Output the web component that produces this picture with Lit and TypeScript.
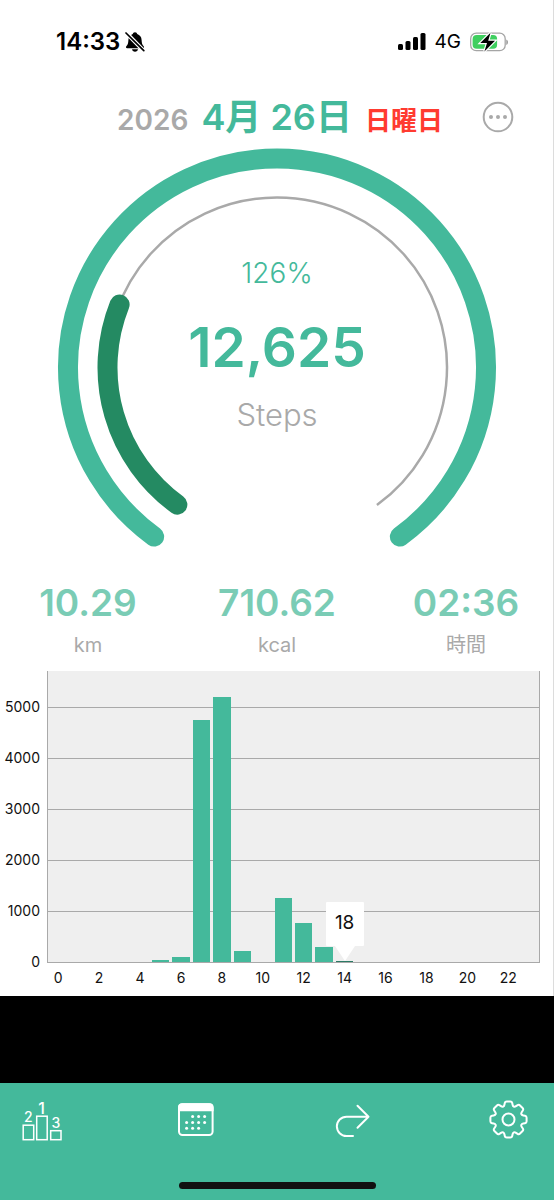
import { LitElement, html, svg, css } from "lit";
import { customElement, property, state } from "lit/decorators.js";

const FONT = css`Inter, "Noto Sans CJK JP", sans-serif`;

/** Point on a circle around (cx, cy); degrees run clockwise from straight down. */
function polar(cx: number, cy: number, r: number, deg: number): string {
  const a = (deg * Math.PI) / 180;
  return `${(cx - r * Math.sin(a)).toFixed(2)} ${(cy + r * Math.cos(a)).toFixed(2)}`;
}

function arc(cx: number, cy: number, r: number, from: number, to: number): string {
  const large = to - from > 180 ? 1 : 0;
  return `M${polar(cx, cy, r, from)}A${r} ${r} 0 ${large} 1 ${polar(cx, cy, r, to)}`;
}

/** Outline of an eight-toothed cog with softly rounded corners. */
function cog(cx: number, cy: number): string {
  const pts: [number, number][] = [];
  for (let k = 0; k < 8; k++) {
    const a = (k * Math.PI) / 4;
    for (const [x, y] of [[-4.4, -13.2], [-3.4, -18.1], [3.4, -18.1], [4.4, -13.2]]) {
      pts.push([
        cx + x * Math.cos(a) - y * Math.sin(a),
        cy + x * Math.sin(a) + y * Math.cos(a),
      ]);
    }
  }
  const n = pts.length;
  const cut = 1.6;
  const toward = (p: [number, number], q: [number, number]) => {
    const d = Math.hypot(q[0] - p[0], q[1] - p[1]);
    const t = Math.min(cut / d, 0.5);
    return `${(p[0] + (q[0] - p[0]) * t).toFixed(2)} ${(p[1] + (q[1] - p[1]) * t).toFixed(2)}`;
  };
  return (
    pts
      .map((p, i) => {
        const prev = pts[(i + n - 1) % n];
        const next = pts[(i + 1) % n];
        return `${i ? "L" : "M"}${toward(p, prev)}Q${p[0].toFixed(2)} ${p[1].toFixed(2)} ${toward(p, next)}`;
      })
      .join("") + "Z"
  );
}

@customElement("status-bar")
export class StatusBar extends LitElement {
  static styles = css`
    :host {
      display: flex;
      align-items: center;
      justify-content: space-between;
      height: 83px;
      padding: 0 46px 0 56px;
      color: #000;
      font-family: ${FONT};
    }
    .group { display: flex; align-items: center; }
    .time { font-size: 24px; font-weight: 600; margin-right: 5px; }
    .net { font-size: 19px; margin: 0 9px; }
    svg { display: block; }
  `;

  render() {
    return html`
      <div class="group">
        <span class="time">14:33</span>
        <svg width="20" height="22" viewBox="0 0 20 22" aria-hidden="true">
          <path d="M10 1.2c1.3 0 2.1.8 2.2 1.9 2.6.9 4.300 3 4.400 5.800.1 3.200.6 4.700 1.900 6.100.9.900.6 2.200-.7 2.200H2.200c-1.300 0-1.600-1.300-.7-2.200C2.800 13.600 3.300 12.100 3.400 8.900c.1-2.800 1.800-4.900 4.400-5.800C7.900 2 8.700 1.200 10 1.200z" />
          <path d="M7 18.300h6c-.2 1.500-1.400 2.400-3 2.400s-2.800-.9-3-2.400z" />
          <path d="M1.500 2.200 19 20" stroke="#fff" stroke-width="4" />
          <path d="M1 2 18.800 19.600" stroke="#000" stroke-width="1.700" stroke-linecap="round" />
        </svg>
      </div>
      <div class="group">
        <svg width="28" height="18" viewBox="0 0 28 18" aria-hidden="true">
          <rect x="0" y="11" width="5" height="6" rx="1.500" />
          <rect x="7.500" y="8" width="5" height="9" rx="1.500" />
          <rect x="15" y="4" width="5" height="13" rx="1.500" />
          <rect x="22.500" y="0" width="5" height="17" rx="1.500" />
        </svg>
        <span class="net">4G</span>
        <svg width="38" height="20" viewBox="0 0 38 20" aria-hidden="true">
          <rect x=".7" y="1.200" width="34.500" height="17.500" rx="5.500" fill="#fff" stroke="#a5a5a5" stroke-width="1.300" />
          <rect x="2.600" y="3.100" width="24.500" height="13.700" rx="4" fill="#3fcf5f" />
          <path d="M36.400 7.500c1.900.7 1.900 4.700 0 5.400z" fill="#8a8a8a" />
          <path d="M20.500.8 10.300 11h6.700l-2.600 8.400 10.600-10.700h-6.800z" stroke="#fff" stroke-width="2.400" />
          <path d="M20.500.8 10.300 11h6.700l-2.600 8.400 10.600-10.700h-6.800z" />
        </svg>
      </div>
    `;
  }
}

@customElement("step-gauge")
export class StepGauge extends LitElement {
  @property({ type: Number }) steps = 0;
  @property({ type: Number }) percent = 0;

  static styles = css`
    :host {
      display: grid;
      justify-items: center;
      padding: 0 57px;
      font-family: ${FONT};
    }
    .dial, .labels { grid-area: 1 / 1; }
    .dial { display: block; width: 100%; max-width: 440px; }
    .labels {
      display: flex;
      flex-direction: column;
      align-items: center;
      padding-top: 108px;
      color: #44b99b;
    }
    .percent { font-size: 28px; line-height: 34px; font-weight: 300; }
    .steps { font-size: 55px; line-height: 68px; font-weight: 600; margin-top: 23px; }
    .unit { font-size: 31px; line-height: 40px; font-weight: 300; color: #a9a9a9; margin-top: 14px; }
  `;

  render() {
    return html`
      <svg class="dial" viewBox="0 0 440 400" fill="none" aria-hidden="true">
        <path d=${arc(220, 219.5, 209, 36, 324)} stroke="#44b99b" stroke-width="20" stroke-linecap="round" />
        <path d=${arc(220, 219.5, 170, 36, 324)} stroke="#a9a9a9" stroke-width="2.500" />
        <path d=${arc(220, 219.5, 169.5, 36, 111.8)} stroke="#248a62" stroke-width="20" stroke-linecap="round" />
      </svg>
      <div class="labels">
        <span class="percent">${this.percent}%</span>
        <span class="steps">${this.steps.toLocaleString("en-US")}</span>
        <span class="unit">Steps</span>
      </div>
    `;
  }
}

@customElement("hour-chart")
export class HourChart extends LitElement {
  @property({ attribute: false }) values: number[] = [];
  @state() private selected = 14;

  static styles = css`
    :host {
      display: grid;
      grid-template-columns: 40px 1fr;
      column-gap: 7px;
      padding: 0 14px 0 0;
      color: #111;
      font-family: ${FONT};
      font-size: 14px;
    }
    .scale, .lines {
      display: flex;
      flex-direction: column;
      justify-content: flex-end;
    }
    .scale { text-align: right; }
    .tick { height: 51px; line-height: 20px; }
    .tick span { display: block; margin-top: -11px; }
    .tick.zero { height: 0; }
    .plot {
      display: grid;
      height: 291px;
      background: #efefef;
      border: solid #a9a9a9;
      border-width: 0 1px 1px;
    }
    .lines, .bars { grid-area: 1 / 1; min-height: 0; }
    .line { box-sizing: border-box; height: 51px; border-top: 1px solid #a9a9a9; }
    .bars { display: grid; grid-template-columns: repeat(24, 1fr); align-items: end; }
    .bar {
      position: relative;
      justify-self: center;
      width: 85%;
      background: #44b99b;
    }
    .bar.selected { background: #2c7a65; min-height: 1px; }
    .tip {
      position: absolute;
      bottom: 16px;
      left: 50%;
      transform: translateX(-50%);
      width: 38px;
      height: 44px;
      line-height: 42px;
      border-radius: 1px;
      background: #fff;
      font-size: 19px;
      text-align: center;
    }
    .tip::after {
      content: "";
      position: absolute;
      top: 100%;
      left: 9px;
      border: 10px solid transparent;
      border-width: 15px 10px 0;
      border-top-color: #fff;
    }
    .hours {
      grid-column: 2;
      display: grid;
      grid-template-columns: repeat(24, minmax(0, 1fr));
      padding: 0 1px;
      height: 33px;
      line-height: 30px;
    }
    .hours span { display: flex; justify-content: center; }
  `;

  render() {
    const top = 5700;
    return html`
      <div class="scale">
        ${[5000, 4000, 3000, 2000, 1000].map((v) => html`<div class="tick"><span>${v}</span></div>`)}
        <div class="tick zero"><span>0</span></div>
      </div>
      <div class="plot">
        <div class="lines">${[1, 2, 3, 4, 5].map(() => html`<div class="line"></div>`)}</div>
        <div class="bars">
          ${this.values.map(
            (v, hour) => html`<div
              class="bar ${hour === this.selected ? "selected" : ""}"
              style="height:${(v / top) * 291}px"
            >${hour === this.selected ? html`<div class="tip">${v}</div>` : ""}</div>`
          )}
        </div>
      </div>
      <div class="hours">
        ${this.values.map((_, hour) => html`<span>${hour % 2 ? "" : hour}</span>`)}
      </div>
    `;
  }
}

@customElement("tab-bar")
export class TabBar extends LitElement {
  static styles = css`
    :host {
      display: flex;
      flex-direction: column;
      justify-content: space-between;
      align-items: center;
      box-sizing: border-box;
      height: 117px;
      padding: 14px 0 11px;
      background: #44b99b;
      font-family: ${FONT};
    }
    nav {
      display: flex;
      justify-content: space-between;
      align-self: stretch;
      padding: 0 24px 0 20px;
    }
    button { padding: 0; border: 0; background: none; cursor: pointer; font-family: inherit; }
    svg { display: block; fill: none; stroke: #fff; stroke-width: 2; }
    .num { font-size: 14px; font-weight: 500; fill: #fff; stroke: none; text-anchor: middle; }
    .num.first { font-size: 16px; }
    .solid { fill: #fff; stroke: none; }
    .round { stroke-linecap: round; stroke-linejoin: round; }
    .home { width: 197px; height: 7px; border-radius: 4px; background: #111; }
  `;

  render() {
    const dots = [[1, 0], [2, 0], [3, 0], [0, 1], [1, 1], [2, 1], [3, 1], [0, 2], [1, 2], [2, 2]];
    return html`
      <nav>
        <button aria-label="ランキング">
          <svg width="44" height="46" viewBox="0 0 44 46">
            <g stroke-width="1.500">
              <rect x="3.200" y="28.200" width="10.500" height="14.500" />
              <rect x="16.700" y="19.200" width="10.500" height="23.500" />
              <rect x="30.700" y="33.700" width="10.300" height="9" />
            </g>
            <text class="num" x="8.400" y="25">2</text>
            <text class="num first" x="21.600" y="16.500">1</text>
            <text class="num" x="35.800" y="30.800">3</text>
          </svg>
        </button>
        <button aria-label="カレンダー">
          <svg width="44" height="46" viewBox="1 0 44 46">
            <rect x="5" y="7.300" width="33.600" height="30.800" rx="3.500" />
            <path class="solid" d="M4 10.500Q4 6.300 8.200 6.300h27.200q4.200 0 4.200 4.200v3.800H4z" />
            ${dots.map(([c, r]) => svg`<circle class="solid" cx=${12.6 + c * 6} cy=${19.5 + r * 5.900} r="1.500" />`)}
          </svg>
        </button>
        <button aria-label="共有">
          <svg class="round" width="44" height="46" viewBox="0 0 44 46">
            <path d="M37.500 19.700H15.500a9.600 9.600 0 0 0 0 19.300h6.500M26.500 8.700l11 11-11 11" />
          </svg>
        </button>
        <button aria-label="設定">
          <svg class="round" width="44" height="46" viewBox="0 0 44 46">
            <path d=${cog(22.5, 22.500)} />
            <circle cx="22.500" cy="22.500" r="6" />
          </svg>
        </button>
      </nav>
      <div class="home"></div>
    `;
  }
}

@customElement("app-root")
export class AppRoot extends LitElement {
  private hourly = [
    0, 0, 0, 0, 0, 43, 94, 4748, 5190, 222, 0, 1260,
    760, 290, 18, 0, 0, 0, 0, 0, 0, 0, 0, 0,
  ];

  static styles = css`
    :host {
      display: flex;
      flex-direction: column;
      min-height: 100vh;
      background: #000;
      font-family: ${FONT};
    }
    main { background: #fff; box-shadow: inset -1px 0 #dcdcdc; }
    header {
      display: grid;
      grid-template-columns: 1fr auto 1fr;
      align-items: center;
      box-sizing: border-box;
      height: 65px;
      padding: 3px 40px 0 46px;
    }
    h1 {
      grid-column: 2;
      display: flex;
      align-items: baseline;
      gap: 13px;
      margin: 0;
      padding-top: 4px;
      font-weight: 600;
      line-height: 48px;
      white-space: nowrap;
    }
    .year { font-size: 28px; color: #a9a9a9; }
    .day { font-size: 36px; color: #44b99b; }
    .weekday { font-size: 26px; color: #ff3b30; }
    .more { justify-self: end; padding: 0; border: 0; background: none; cursor: pointer; }
    .more svg { display: block; }
    .stats {
      display: grid;
      grid-template-columns: repeat(3, 120px);
      justify-content: space-between;
      margin: 0;
      padding: 31px 28px 10px;
    }
    .stat { display: flex; flex-direction: column-reverse; align-items: center; }
    dd { margin: 0; font-size: 37px; line-height: 48px; font-weight: 600; color: #7accb5; }
    dt { font-size: 20px; line-height: 32px; margin-top: 2px; color: #a9a9a9; }
    .spacer { flex: 1; }
  `;

  render() {
    return html`
      <main>
        <status-bar></status-bar>
        <header>
          <h1>
            <span class="year">2026</span>
            <span class="day">4月 26日</span>
            <span class="weekday">日曜日</span>
          </h1>
          <button class="more" aria-label="メニュー">
            <svg width="32" height="32" viewBox="0 0 32 32" fill="#a9a9a9">
              <circle cx="16" cy="16" r="14.300" fill="none" stroke="#a9a9a9" stroke-width="2" />
              <circle cx="9" cy="16" r="2" />
              <circle cx="16" cy="16" r="2" />
              <circle cx="23" cy="16" r="2" />
            </svg>
          </button>
        </header>
        <step-gauge .steps=${12625} .percent=${126}></step-gauge>
        <dl class="stats">
          <div class="stat"><dt>km</dt><dd>10.29</dd></div>
          <div class="stat"><dt>kcal</dt><dd>710.62</dd></div>
          <div class="stat"><dt>時間</dt><dd>02:36</dd></div>
        </dl>
        <hour-chart .values=${this.hourly}></hour-chart>
      </main>
      <div class="spacer"></div>
      <tab-bar></tab-bar>
    `;
  }
}
